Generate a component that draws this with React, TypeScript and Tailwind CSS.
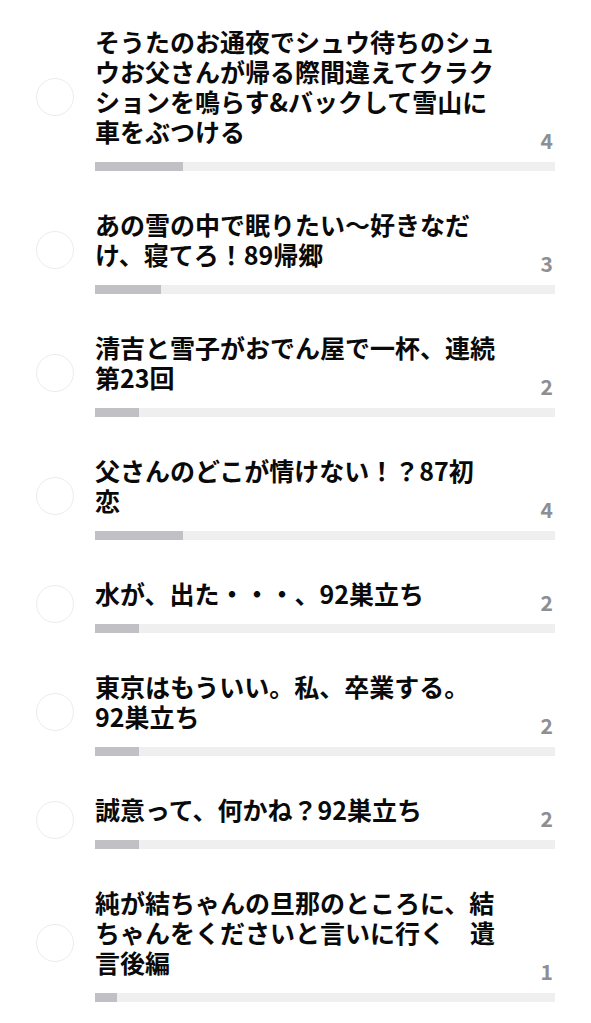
import React from 'react'

const items = [
  { title: 'そうたのお通夜でシュウ待ちのシュウお父さんが帰る際間違えてクラクションを鳴らす&バックして雪山に車をぶつける', votes: 4 },
  { title: 'あの雪の中で眠りたい〜好きなだけ、寝てろ！89帰郷', votes: 3 },
  { title: '清吉と雪子がおでん屋で一杯、連続第23回', votes: 2 },
  { title: '父さんのどこが情けない！？87初恋', votes: 4 },
  { title: '水が、出た・・・、92巣立ち', votes: 2 },
  { title: '東京はもういい。私、卒業する。92巣立ち', votes: 2 },
  { title: '誠意って、何かね？92巣立ち', votes: 2 },
  { title: '純が結ちゃんの旦那のところに、結ちゃんをくださいと言いに行く　遺言後編', votes: 1 },
]

// bar scale, matched to the filled widths in the screenshot
const MAX = 21

export default function App() {
  return (
    <div
      className="min-h-screen bg-white pt-[7px]"
      style={{ fontFamily: '"Noto Sans CJK JP", "Noto Sans", sans-serif' }}
    >
      {items.map((item, i) => (
        <div key={i} className="flex items-center pl-[36px] pr-[36px]">
          {/* radio */}
          <div className="w-[38px] h-[38px] mb-[4px] rounded-full border-[1.5px] border-[#ececec] shrink-0" />
          <div className="flex-1 ml-[21px] pt-[19px] pb-[19px]">
            <div className="flex items-end">
              <p className="w-[402px] text-[25px] leading-[30px] font-bold text-[#0a0a0a]">
                {item.title}
              </p>
              <span className="ml-auto mr-[2px] mb-[-4px] text-[21px] leading-[20px] font-bold text-[#8e8e93]">
                {item.votes}
              </span>
            </div>
            <div className="mt-[16px] h-[9px] bg-[#efeff0]">
              <div className="h-full bg-[#c0c0c5]" style={{ width: `${(item.votes / MAX) * 100}%` }} />
            </div>
          </div>
        </div>
      ))}
    </div>
  )
}
